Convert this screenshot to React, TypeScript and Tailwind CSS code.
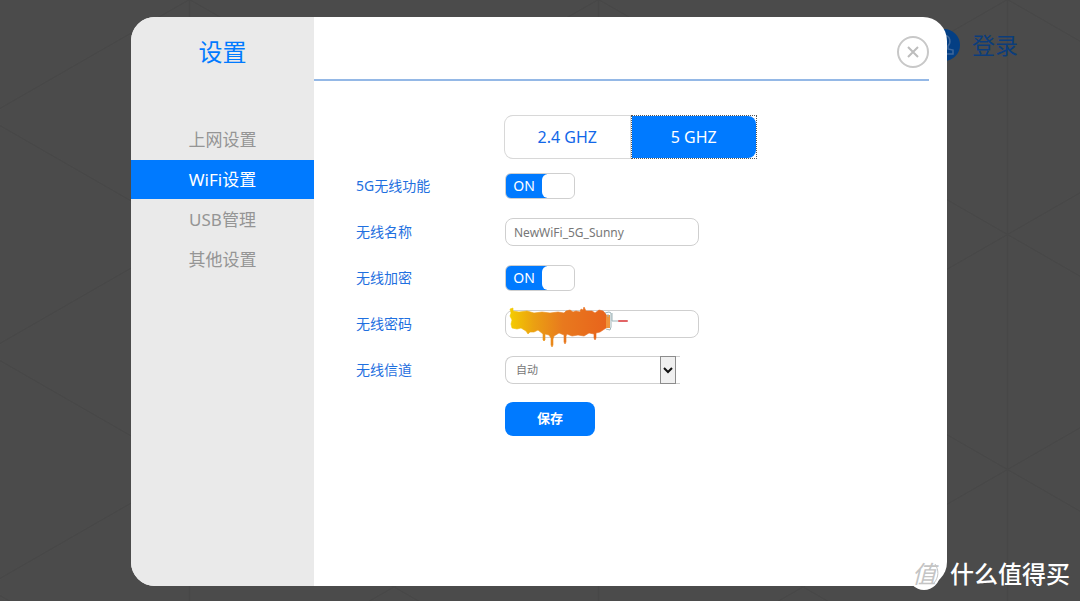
import { useState } from "react";
import clsx from "clsx";

const menu = ["上网设置", "WiFi设置", "USB管理", "其他设置"];
const bands = ["2.4 GHZ", "5 GHZ"];

function Backdrop() {
  return (
    <svg className="absolute inset-0 h-full w-full" aria-hidden="true">
      <defs>
        <pattern
          id="grid"
          x="-15"
          y="117"
          width="409"
          height="235"
          patternUnits="userSpaceOnUse"
        >
          <path
            d="M0 0L409 235M409 0L0 235M204.5 0V235"
            stroke="#474747"
            strokeWidth="1.5"
            fill="none"
          />
        </pattern>
      </defs>
      <rect width="100%" height="100%" fill="url(#grid)" />
    </svg>
  );
}

function Login() {
  return (
    <a
      href="#login"
      className="absolute top-[29px] left-1/2 ml-[388px] flex items-center gap-3 text-[23px] leading-8 text-[#0b3d7c]"
    >
      <svg width="32" height="32" viewBox="0 0 32 32" fill="none">
        <circle cx="16" cy="16" r="16" fill="#043f84" />
        <path
          d="M12 17c-3-3-3-10 4-11 7 1 7 8 4 11v3l5 1v4H7v-4l5-1z"
          stroke="#3f689b"
          strokeWidth="1.5"
        />
      </svg>
      登录
    </a>
  );
}

function Sidebar() {
  const [current, setCurrent] = useState("WiFi设置");

  return (
    <aside className="w-[183px] shrink-0 bg-[#eaeaea] text-center">
      <h1 className="pt-[17px] text-2xl leading-9 text-[#007aff]">设置</h1>
      <nav className="mt-[50px] flex flex-col gap-px">
        {menu.map((item) => (
          <button
            key={item}
            type="button"
            onClick={() => setCurrent(item)}
            className={clsx(
              "h-[39px] w-full text-[17px]",
              item === current ? "bg-[#007aff] text-white" : "text-[#959595]"
            )}
          >
            {item}
          </button>
        ))}
      </nav>
    </aside>
  );
}

function BandTabs() {
  const [band, setBand] = useState("5 GHZ");

  return (
    <div className="ml-[148px] flex h-11 w-[253px]">
      {bands.map((item, i) => (
        <div
          key={item}
          className={clsx(
            "flex-1 border",
            item === band ? "border-dotted border-[#555]" : "border-transparent"
          )}
        >
          <button
            type="button"
            onClick={() => setBand(item)}
            className={clsx(
              "h-full w-full text-base outline-none",
              i === 0 ? "rounded-l-lg" : "rounded-r-lg",
              item === band
                ? "bg-[#007aff] text-white"
                : "text-[#1267e8] ring-1 ring-[#d8d8d8]"
            )}
          >
            {item}
          </button>
        </div>
      ))}
    </div>
  );
}

function Toggle({ id }: { id: string }) {
  return (
    <label
      htmlFor={id}
      className="relative flex h-[26px] w-[70px] cursor-pointer items-center overflow-hidden rounded-md border border-[#cfcfcf] bg-linear-to-r from-[#cfcfcf] from-60% to-white to-60% has-checked:from-[#007aff]"
    >
      <input id={id} type="checkbox" defaultChecked className="peer sr-only" />
      <span className="invisible w-9 text-center text-sm text-white peer-checked:visible">
        ON
      </span>
      <span className="h-full flex-1 rounded-md bg-white" />
    </label>
  );
}

function PaintRoller() {
  return (
    <svg
      className="pointer-events-none absolute -top-2 left-0.5"
      width="124"
      height="46"
      viewBox="0 0 124 46"
      aria-hidden="true"
    >
      <defs>
        <linearGradient id="paint">
          <stop offset="0" stopColor="#f4cc00" />
          <stop offset="0.25" stopColor="#eba012" />
          <stop offset="0.55" stopColor="#e8791e" />
          <stop offset="1" stopColor="#e8641c" />
        </linearGradient>
      </defs>
      <path
        d="M3 7L6 6L6 9L12 10L20 9L27 11L35 10L43 11L51 10L57 11L59 9L63 8L66 10L69 9L73 10L74 7L76 8L77 5L79 9L85 9L88 11L92 8L96 9L99 12V26L96 28L93 30L89 31L89 36L88 38L87 36L87 32L82 31L77 34L71 33L65 34L60 32L59 34L59 40L58 42L57 40L57 33L52 31L47 34L46 37L46 43L45 45L44 43L44 36L42 33L38 32L38 38L37 39L36 38L36 32L31 28L27 30L23 30L21 32L19 29L14 26L10 27L5 26L4 22L5 18L3 14L4 11Z"
        fill="url(#paint)"
        stroke="url(#paint)"
        strokeWidth="0.6"
        strokeLinejoin="round"
      />
      <rect x="99" y="13" width="4" height="13" fill="#f0943a" />
      <path
        d="M98 11l4-1 2 1v4M99 27l4 1 1-3V15M101 12v3M105 11v8h7"
        stroke="#9fb4b8"
        fill="none"
      />
      <path d="M112 19h8" stroke="#e26466" strokeWidth="2" strokeLinecap="round" />
    </svg>
  );
}

function Row({
  id,
  label,
  children,
}: {
  id: string;
  label: string;
  children: React.ReactNode;
}) {
  return (
    <div className="flex h-7 items-center">
      <label htmlFor={id} className="w-[149px] text-sm text-[#1f70e0]">
        {label}
      </label>
      {children}
    </div>
  );
}

const field =
  "h-7 rounded-lg border border-[#cfcfcf] bg-white px-2 text-xs text-[#777] outline-none";

function WifiForm() {
  return (
    <form
      className="flex flex-col gap-[18px] pl-[42px]"
      onSubmit={(e) => e.preventDefault()}
    >
      <Row id="radio" label="5G无线功能">
        <Toggle id="radio" />
      </Row>
      <Row id="ssid" label="无线名称">
        <input
          id="ssid"
          type="text"
          defaultValue="NewWiFi_5G_Sunny"
          className={clsx(field, "w-[194px]")}
        />
      </Row>
      <Row id="encrypt" label="无线加密">
        <Toggle id="encrypt" />
      </Row>
      <Row id="password" label="无线密码">
        <div className="relative">
          <input
            id="password"
            type="password"
            className={clsx(field, "block w-[194px]")}
          />
          <PaintRoller />
        </div>
      </Row>
      <Row id="channel" label="无线信道">
        <div className="relative">
          <select
            id="channel"
            className="block h-7 w-[175px] appearance-none rounded-l-lg border border-r-0 border-[#cfcfcf] bg-white pl-2.5 text-[11px] text-[#777] outline-none"
          >
            <option>自动</option>
          </select>
          <span className="pointer-events-none absolute inset-y-0 right-1 flex w-4 items-center justify-center border border-[#8c8c8c] bg-[#f0f0f0]">
            <svg width="10" height="7" viewBox="0 0 10 7" fill="none">
              <path d="M1 1l4 4 4-4" stroke="#111" strokeWidth="2" />
            </svg>
          </span>
        </div>
      </Row>
      <button
        type="submit"
        className="ml-[149px] h-[34px] w-[90px] rounded-lg bg-[#007aff] text-[13px] font-bold text-white"
      >
        保存
      </button>
    </form>
  );
}

function Watermark() {
  return (
    <div className="absolute right-2.5 bottom-[11px] flex items-center gap-2.5 text-white">
      <span className="relative flex size-8 items-center justify-center rounded-full bg-white text-2xl leading-8 text-[#c4c4c4] italic">
        值
        <svg
          className="absolute inset-0"
          width="32"
          height="32"
          viewBox="0 0 32 32"
          fill="none"
        >
          <path d="M27 6c4 6 4 13-1 19" stroke="#c4c4c4" />
        </svg>
      </span>
      <span className="text-2xl leading-8 font-medium">什么值得买</span>
    </div>
  );
}

export default function App() {
  return (
    <div className="relative flex min-h-screen overflow-hidden bg-[#4b4b4b] pt-[17px] pr-0.5 pb-[15px] font-['Noto_Sans','Noto_Sans_CJK_SC',sans-serif]">
      <Backdrop />
      <Login />
      <main className="relative mx-auto flex w-full max-w-[816px] overflow-hidden rounded-3xl bg-white">
        <Sidebar />
        <section className="flex-1">
          <header className="mr-[18px] flex h-16 items-center justify-end border-b-2 border-[#94b8e6] pt-2">
            <button
              type="button"
              aria-label="关闭"
              className="flex size-8 items-center justify-center rounded-full border-2 border-[#c8c8c8]"
            >
              <svg width="12" height="12" viewBox="0 0 12 12" fill="none">
                <path d="M1 1l10 10M11 1L1 11" stroke="#bdbdbd" strokeWidth="2" />
              </svg>
            </button>
          </header>
          <div className="flex flex-col gap-[13px] pt-[34px]">
            <div className="pl-[42px]">
              <BandTabs />
            </div>
            <WifiForm />
          </div>
        </section>
      </main>
      <Watermark />
    </div>
  );
}
